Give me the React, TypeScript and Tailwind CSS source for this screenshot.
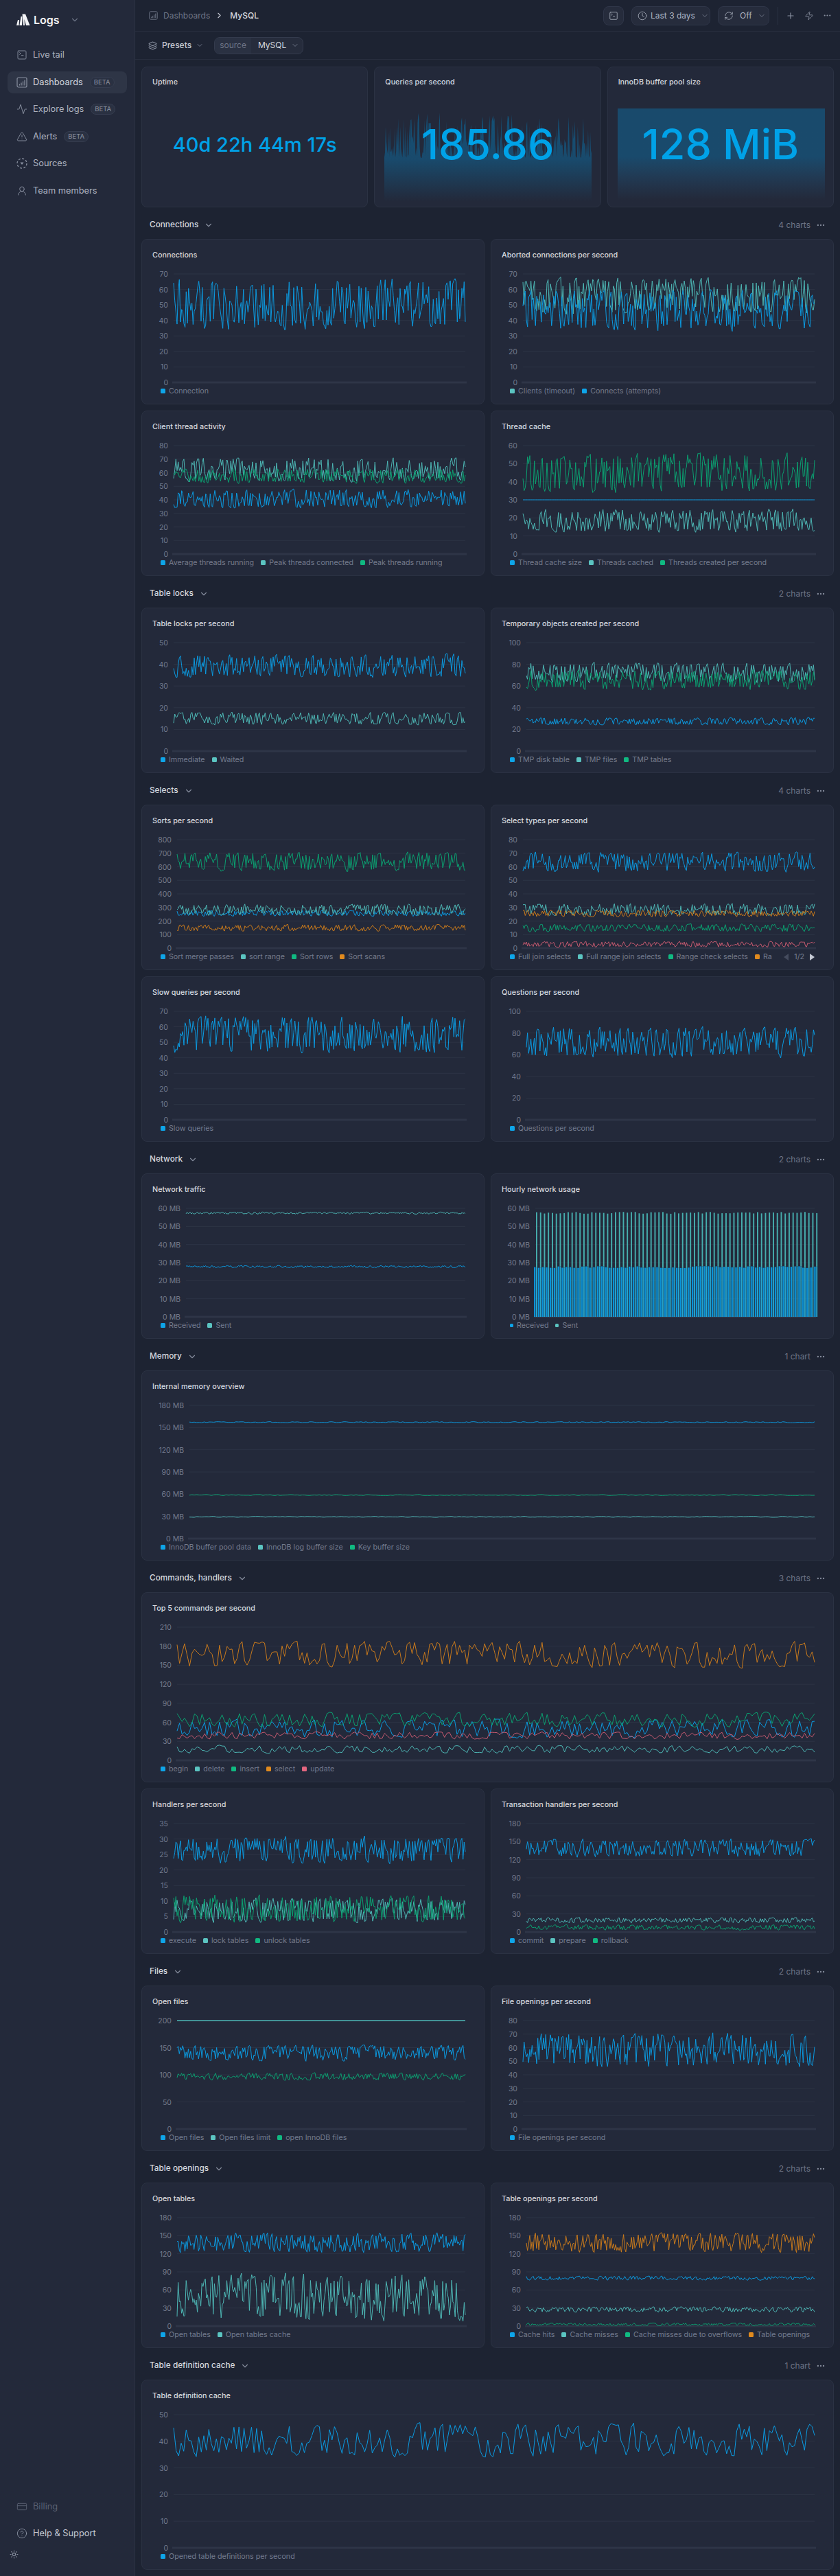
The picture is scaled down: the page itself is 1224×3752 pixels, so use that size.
import React from "react";
import {
  Activity,
  ChevronDown,
  ChevronRight,
  CircleHelp,
  Clock,
  CreditCard,
  Ellipsis,
  Layers3,
  Plus,
  RefreshCw,
  SquareTerminal,
  Sun,
  TriangleAlert,
  UserRound,
  Zap,
} from "lucide-react";

type ColorName = "blue" | "teal" | "green" | "orange" | "red";

const STROKES: Record<ColorName, string> = {
  blue: "#0b9ae0",
  teal: "#4db6b4",
  green: "#0b9f70",
  orange: "#c97a1c",
  red: "#c4596f",
};

const SWATCHES: Record<ColorName, string> = {
  blue: "bg-[#0ea5e9]",
  teal: "bg-[#5bc4c1]",
  green: "bg-[#10b981]",
  orange: "bg-[#e08a1e]",
  red: "bg-[#e3667f]",
};

type Series = { name: string; color: ColorName; lo: number; hi: number; thick?: boolean };

type ChartDef = {
  title: string;
  ticks: string[];
  max: number;
  series: Series[];
  left?: number;
  wide?: boolean;
  bars?: boolean;
  pager?: boolean;
};

type SectionDef = { title: string; count: string; charts: ChartDef[] };

const seq = (step: number, n: number, unit = "") =>
  Array.from({ length: n + 1 }, (_, i) => `${i * step}${unit}`);

const SECTIONS: SectionDef[] = [
  {
    title: "Connections",
    count: "4 charts",
    charts: [
      {
        title: "Connections",
        ticks: seq(10, 7),
        max: 70,
        series: [{ name: "Connection", color: "blue", lo: 34, hi: 67 }],
      },
      {
        title: "Aborted connections per second",
        ticks: seq(10, 7),
        max: 70,
        series: [
          { name: "Clients (timeout)", color: "teal", lo: 44, hi: 68 },
          { name: "Connects (attempts)", color: "blue", lo: 33, hi: 60 },
        ],
      },
      {
        title: "Client thread activity",
        ticks: seq(10, 8),
        max: 80,
        series: [
          { name: "Average threads running", color: "blue", lo: 34, hi: 48 },
          { name: "Peak threads connected", color: "teal", lo: 53, hi: 71 },
          { name: "Peak threads running", color: "green", lo: 52, hi: 63 },
        ],
      },
      {
        title: "Thread cache",
        ticks: seq(10, 6),
        max: 60,
        series: [
          { name: "Thread cache size", color: "blue", lo: 30, hi: 30 },
          { name: "Threads cached", color: "teal", lo: 12, hi: 25 },
          { name: "Threads created per second", color: "green", lo: 34, hi: 56 },
        ],
      },
    ],
  },
  {
    title: "Table locks",
    count: "2 charts",
    charts: [
      {
        title: "Table locks per second",
        ticks: seq(10, 5),
        max: 50,
        series: [
          { name: "Immediate", color: "blue", lo: 34, hi: 45 },
          { name: "Waited", color: "teal", lo: 12, hi: 18 },
        ],
      },
      {
        title: "Temporary objects created per second",
        ticks: seq(20, 5),
        max: 100,
        left: 51,
        series: [
          { name: "TMP disk table", color: "blue", lo: 24, hi: 31 },
          { name: "TMP files", color: "teal", lo: 63, hi: 82 },
          { name: "TMP tables", color: "green", lo: 56, hi: 75 },
        ],
      },
    ],
  },
  {
    title: "Selects",
    count: "4 charts",
    charts: [
      {
        title: "Sorts per second",
        ticks: seq(100, 8),
        max: 800,
        left: 51,
        series: [
          { name: "Sort merge passes", color: "blue", lo: 235, hi: 280 },
          { name: "sort range", color: "teal", lo: 240, hi: 325 },
          { name: "Sort rows", color: "green", lo: 565, hi: 710 },
          { name: "Sort scans", color: "orange", lo: 125, hi: 175 },
        ],
      },
      {
        title: "Select types per second",
        ticks: seq(10, 8),
        max: 80,
        pager: true,
        series: [
          { name: "Full join selects", color: "blue", lo: 56, hi: 71 },
          { name: "Full range join selects", color: "teal", lo: 24, hi: 33 },
          { name: "Range check selects", color: "green", lo: 12, hi: 18 },
          { name: "Ra", color: "orange", lo: 23, hi: 28 },
          { name: "", color: "red", lo: 0.5, hi: 5 },
        ],
      },
      {
        title: "Slow queries per second",
        ticks: seq(10, 7),
        max: 70,
        series: [{ name: "Slow queries", color: "blue", lo: 43, hi: 67 }],
      },
      {
        title: "Questions per second",
        ticks: seq(20, 5),
        max: 100,
        left: 51,
        series: [{ name: "Questions per second", color: "blue", lo: 57, hi: 86 }],
      },
    ],
  },
  {
    title: "Network",
    count: "2 charts",
    charts: [
      {
        title: "Network traffic",
        ticks: seq(10, 6, " MB"),
        max: 60,
        left: 64,
        series: [
          { name: "Received", color: "blue", lo: 27.2, hi: 28.4 },
          { name: "Sent", color: "teal", lo: 56.8, hi: 58 },
        ],
      },
      {
        title: "Hourly network usage",
        ticks: seq(10, 6, " MB"),
        max: 60,
        left: 64,
        bars: true,
        series: [
          { name: "Received", color: "blue", lo: 27, hi: 28 },
          { name: "Sent", color: "teal", lo: 57, hi: 58 },
        ],
      },
    ],
  },
  {
    title: "Memory",
    count: "1 chart",
    charts: [
      {
        title: "Internal memory overview",
        ticks: seq(30, 6, " MB"),
        max: 180,
        left: 69,
        wide: true,
        series: [
          { name: "InnoDB buffer pool data", color: "blue", lo: 156.5, hi: 158 },
          { name: "InnoDB log buffer size", color: "teal", lo: 28.8, hi: 30 },
          { name: "Key buffer size", color: "green", lo: 58, hi: 59.5 },
        ],
      },
    ],
  },
  {
    title: "Commands, handlers",
    count: "3 charts",
    charts: [
      {
        title: "Top 5 commands per second",
        ticks: seq(30, 7),
        max: 210,
        left: 51,
        wide: true,
        series: [
          { name: "begin", color: "blue", lo: 35, hi: 65 },
          { name: "delete", color: "teal", lo: 11, hi: 24 },
          { name: "insert", color: "green", lo: 52, hi: 76 },
          { name: "select", color: "orange", lo: 145, hi: 188 },
          { name: "update", color: "red", lo: 33, hi: 45 },
        ],
      },
      {
        title: "Handlers per second",
        ticks: seq(5, 7),
        max: 35,
        series: [
          { name: "execute", color: "blue", lo: 22, hi: 31 },
          { name: "lock tables", color: "teal", lo: 3, hi: 11 },
          { name: "unlock tables", color: "green", lo: 3, hi: 12 },
        ],
      },
      {
        title: "Transaction handlers per second",
        ticks: seq(30, 6),
        max: 180,
        left: 51,
        series: [
          { name: "commit", color: "blue", lo: 124, hi: 155 },
          { name: "prepare", color: "teal", lo: 15, hi: 24 },
          { name: "rollback", color: "green", lo: 3, hi: 12 },
        ],
      },
    ],
  },
  {
    title: "Files",
    count: "2 charts",
    charts: [
      {
        title: "Open files",
        ticks: seq(50, 4),
        max: 200,
        left: 51,
        series: [
          { name: "Open files", color: "blue", lo: 125, hi: 155 },
          { name: "Open files limit", color: "teal", lo: 200, hi: 200, thick: true },
          { name: "open InnoDB files", color: "green", lo: 90, hi: 104 },
        ],
      },
      {
        title: "File openings per second",
        ticks: seq(10, 8),
        max: 80,
        series: [{ name: "File openings per second", color: "blue", lo: 46, hi: 71 }],
      },
    ],
  },
  {
    title: "Table openings",
    count: "2 charts",
    charts: [
      {
        title: "Open tables",
        ticks: seq(30, 6),
        max: 180,
        left: 51,
        series: [
          { name: "Open tables", color: "blue", lo: 122, hi: 155 },
          { name: "Open tables cache", color: "teal", lo: 8, hi: 88 },
        ],
      },
      {
        title: "Table openings per second",
        ticks: seq(30, 6),
        max: 180,
        left: 51,
        series: [
          { name: "Cache hits", color: "blue", lo: 76, hi: 83 },
          { name: "Cache misses", color: "teal", lo: 23, hi: 32 },
          { name: "Cache misses due to overflows", color: "green", lo: 0.5, hi: 5 },
          { name: "Table openings", color: "orange", lo: 122, hi: 155 },
        ],
      },
    ],
  },
  {
    title: "Table definition cache",
    count: "1 chart",
    charts: [
      {
        title: "Table definition cache",
        ticks: seq(10, 5),
        max: 50,
        wide: true,
        series: [{ name: "Opened table definitions per second", color: "blue", lo: 34, hi: 47 }],
      },
    ],
  },
];

// small seeded generator so the noise stays the same between runs
const randomFrom = (seed: number) => {
  let a = seed >>> 0;
  return () => {
    a = (a + 0x6d2b79f5) | 0;
    let t = Math.imul(a ^ (a >>> 15), 1 | a);
    t = (t + Math.imul(t ^ (t >>> 7), 61 | t)) ^ t;
    return ((t ^ (t >>> 14)) >>> 0) / 4294967296;
  };
};

const hashText = (text: string) => {
  let h = 7;
  for (const ch of text) h = (Math.imul(h, 31) + ch.charCodeAt(0)) | 0;
  return h;
};

const noise = (seed: string, count: number) => {
  const rand = randomFrom(hashText(seed));
  const out: number[] = [];
  let prev = 0.5;
  for (let i = 0; i < count; i++) {
    const r = rand();
    const pushed = r < 0.28 ? r / 0.28 / 6 : r > 0.72 ? 1 - (1 - r) / 0.28 / 6 : r;
    prev = pushed * 0.82 + prev * 0.18;
    out.push(prev);
  }
  const min = Math.min(...out);
  const max = Math.max(...out);
  return out.map((v) => (v - min) / (max - min));
};

const PLOT_TOP = 11;

const Chart = ({ def }: { def: ChartDef }) => {
  const width = def.wide ? 1007 : 498;
  const height = def.wide ? 212 : 176;
  const axis = def.wide ? 205 : 169;
  const left = def.left ?? 46;
  const right = width - 27;
  const toY = (v: number) => axis - (v / def.max) * (axis - PLOT_TOP);
  const step = (axis - PLOT_TOP) / (def.ticks.length - 1);

  return (
    <svg width={width} height={height} className="block">
      {def.ticks.map((label, i) => {
        const y = axis - step * i;
        return (
          <g key={label}>
            {i > 0 && <line x1={left} x2={right} y1={y} y2={y} stroke="#2d3445" />}
            <text
              x={left - 8}
              y={y + 4}
              textAnchor="end"
              className="fill-[#747b8d] text-[10.5px]"
            >
              {label}
            </text>
          </g>
        );
      })}
      <rect x={left - 2} y={axis - 1.5} width={right - left + 4} height={3} fill="#2e3547" />
      {def.bars ? (
        <Bars def={def} left={left - 2} toY={toY} axis={axis} />
      ) : (
        def.series.map((s) => {
          const values = noise(def.title + s.name + s.color, 256);
          const points = values
            .map((v, i) => {
              const x = left + (i / 255) * (right - left);
              return `${x.toFixed(1)},${toY(s.lo + v * (s.hi - s.lo)).toFixed(1)}`;
            })
            .join(" ");
          return (
            <polyline
              key={s.color}
              points={points}
              fill="none"
              stroke={STROKES[s.color]}
              strokeWidth={s.thick ? 1.5 : 1}
              strokeLinejoin="round"
            />
          );
        })
      )}
    </svg>
  );
};

const Bars = ({
  def,
  left,
  toY,
  axis,
}: {
  def: ChartDef;
  left: number;
  toY: (v: number) => number;
  axis: number;
}) => {
  const [received, sent] = def.series;
  const low = noise("hourly-received", 72);
  const high = noise("hourly-sent", 72);
  return (
    <g>
      {low.map((v, i) => {
        const x = left + i * 5.75;
        const lowY = toY(received.lo + v * (received.hi - received.lo));
        const highY = toY(sent.lo + high[i] * (sent.hi - sent.lo));
        return (
          <g key={i}>
            <rect x={x} y={lowY} width={2.4} height={axis - lowY} fill="#0a93d8" />
            <rect x={x + 3} y={highY} width={1.9} height={lowY - highY} fill="#46aeae" />
            <rect x={x + 3} y={lowY} width={1.9} height={axis - lowY} fill="#28a6cb" />
          </g>
        );
      })}
    </g>
  );
};

const Legend = ({ def }: { def: ChartDef }) => (
  <div className="flex h-[12px] items-center gap-[10px] overflow-hidden whitespace-nowrap pl-[27px] pr-[27px] text-[10.7px] leading-none text-[#747b8d]">
    {def.series
      .filter((s) => s.name)
      .map((s) => (
        <div key={s.color} className="flex shrink-0 items-center gap-[5px]">
          <span
            className={`rounded-[1.5px] ${SWATCHES[s.color]} ${def.bars ? "h-[5px] w-[5px]" : "h-[7px] w-[7px]"}`}
          />
          <span>{s.name}</span>
        </div>
      ))}
    {def.pager && (
      <div className="ml-auto flex shrink-0 items-center gap-[8px]">
        <span className="h-0 w-0 border-y-[5px] border-r-[7px] border-y-transparent border-r-[#454c5e]" />
        <span>1/2</span>
        <span className="h-0 w-0 border-y-[5px] border-l-[7px] border-y-transparent border-l-[#c4c9d4]" />
      </div>
    )}
  </div>
);

const Card = ({ def }: { def: ChartDef }) => (
  <div
    className={`flex flex-col rounded-lg border border-[#2b3243] bg-[#23293a] ${
      def.wide ? "col-span-2 h-[277px]" : "h-[241px]"
    }`}
  >
    <div className="flex h-[39px] items-end pb-[8px] pl-[15px] text-[10.8px] font-medium leading-4 text-[#d5d8df]">
      {def.title}
    </div>
    <Chart def={def} />
    <Legend def={def} />
  </div>
);

const Section = ({ section }: { section: SectionDef }) => (
  <section>
    <div className="flex h-[46px] items-center justify-between pl-[12px] pr-[12px] pt-[5px]">
      <div className="flex items-center gap-[8px] text-[11.8px] font-medium text-[#d5d8df]">
        {section.title}
        <ChevronDown size={14} className="text-[#858c9c]" />
      </div>
      <div className="flex items-center gap-[8px] text-[12px] text-[#6d7486]">
        {section.count}
        <Ellipsis size={14} className="text-[#858c9c]" />
      </div>
    </div>
    <div className="grid grid-cols-2 gap-[9px]">
      {section.charts.map((c) => (
        <Card key={c.title} def={c} />
      ))}
    </div>
  </section>
);

const Logo = () => (
  <svg width="20" height="18" viewBox="0 0 20 18" fill="#f3f4f6">
    <polygon points="0,17 2,9 4,9 3.5,17" />
    <polygon points="4.5,17 6.5,4 8.5,4 8,17" />
    <polygon points="10,17 8.5,0.5 13,0.5 19.5,17 14,17 11.5,8 12,17" />
  </svg>
);

const DashIcon = ({ size = 16 }: { size?: number }) => (
  <svg width={size} height={size} viewBox="0 0 16 16" fill="none" stroke="currentColor" strokeWidth="1.2">
    <rect x="1" y="1" width="14" height="14" rx="2" />
    <path d="M4.5 12.5v-2M7 12.5v-4M9.5 12.5v-6M12 12.5v-8" />
  </svg>
);

const SourcesIcon = () => (
  <svg width="16" height="16" viewBox="0 0 16 16" fill="none" stroke="currentColor" strokeWidth="1.3">
    <circle cx="8" cy="8" r="7" strokeDasharray="3 2.5" />
    <path d="M5.5 6.5h5L8 10z" fill="currentColor" stroke="none" />
  </svg>
);

const Beta = () => (
  <span className="ml-[2px] rounded-full border border-[#363d50] bg-[#2a3142] px-[5px] text-[9.5px] leading-[14px] text-[#8a91a1]">
    BETA
  </span>
);

const NAV = [
  { label: "Live tail", icon: <SquareTerminal size={16} strokeWidth={1.4} /> },
  { label: "Dashboards", icon: <DashIcon />, beta: true, active: true },
  { label: "Explore logs", icon: <Activity size={16} strokeWidth={1.4} />, beta: true },
  { label: "Alerts", icon: <TriangleAlert size={16} strokeWidth={1.4} />, beta: true },
  { label: "Sources", icon: <SourcesIcon /> },
  { label: "Team members", icon: <UserRound size={16} strokeWidth={1.4} /> },
];

const Sidebar = () => (
  <aside className="flex w-[197px] shrink-0 flex-col border-r border-[#2b3243] bg-[#23293a]">
    <div className="flex h-[56px] items-center gap-[5px] pl-[24px] pt-[1px]">
      <Logo />
      <span className="text-[16px] font-semibold text-[#f3f4f6]">Logs</span>
      <ChevronDown size={14} className="ml-[10px] text-[#6d7486]" />
    </div>
    <nav className="mt-[8px] flex flex-col gap-[7.5px] px-[11px]">
      {NAV.map((item) => (
        <div
          key={item.label}
          className={`flex h-[32px] items-center gap-[8px] rounded-lg pl-[13px] text-[12.8px] ${
            item.active ? "bg-[#2e3546] text-[#d5d8df]" : "text-[#adb3c0]"
          }`}
        >
          <span className="text-[#8a91a1]">{item.icon}</span>
          <span>{item.label}</span>
          {item.beta && <Beta />}
        </div>
      ))}
    </nav>
    <div className="mt-auto flex flex-col gap-[7px] pb-[25px] px-[11px]">
      <div className="flex h-[32px] items-center gap-[8px] pl-[13px] text-[12.8px] text-[#5a6172]">
        <CreditCard size={16} strokeWidth={1.4} />
        <span>Billing</span>
      </div>
      <div className="flex h-[32px] items-center gap-[8px] pl-[13px] text-[12.8px] text-[#c5c9d3]">
        <CircleHelp size={16} strokeWidth={1.4} className="text-[#8a91a1]" />
        <span>Help & Support</span>
      </div>
      <Sun size={13} className="ml-[3px] mt-[1px] text-[#8a91a1]" />
    </div>
  </aside>
);

const TopButton = ({ children, className }: { children: React.ReactNode; className: string }) => (
  <div
    className={`flex h-[28px] items-center rounded-lg border border-[#2f3648] bg-[#262c3c] text-[12px] text-[#adb3c0] ${className}`}
  >
    {children}
  </div>
);

const Header = () => (
  <header className="flex h-[46px] items-center border-b border-[#282e3e] pl-[20px] pr-[12px]">
    <span className="text-[#6d7486]">
      <DashIcon size={13} />
    </span>
    <span className="ml-[8px] text-[12px] text-[#6d7486]">Dashboards</span>
    <ChevronRight size={13} className="ml-[7px] text-[#c5c9d3]" />
    <span className="ml-[9px] text-[12px] font-medium text-[#d5d8df]">MySQL</span>
    <div className="ml-auto flex items-center">
      <TopButton className="w-[30px] justify-center">
        <SquareTerminal size={14} strokeWidth={1.4} />
      </TopButton>
      <TopButton className="ml-[11px] w-[115px] pl-[8px]">
        <Clock size={14} strokeWidth={1.4} />
        <span className="ml-[5px]">Last 3 days</span>
        <ChevronDown size={12} className="ml-[8px] text-[#6d7486]" />
      </TopButton>
      <TopButton className="ml-[11px] w-[75px] pl-[8px]">
        <RefreshCw size={14} strokeWidth={1.4} />
        <span className="ml-[9px]">Off</span>
        <ChevronDown size={12} className="ml-[8px] text-[#6d7486]" />
      </TopButton>
      <div className="ml-[12px] h-[26px] w-px bg-[#2b3243]" />
      <Plus size={14} className="ml-[11px] text-[#8a91a1]" />
      <Zap size={14} strokeWidth={1.5} className="ml-[13px] text-[#8a91a1]" />
      <Ellipsis size={13} className="ml-[13px] text-[#8a91a1]" />
    </div>
  </header>
);

const Toolbar = () => (
  <div className="flex h-[41px] items-center border-b border-[#282e3e] pl-[19px]">
    <Layers3 size={13} className="text-[#8a91a1]" />
    <span className="ml-[7px] text-[12px] font-medium text-[#c5c9d3]">Presets</span>
    <ChevronDown size={12} className="ml-[6px] text-[#6d7486]" />
    <div className="ml-[15px] flex h-[25px] w-[130px] items-center overflow-hidden rounded-lg border border-[#343b4d] bg-[#262c3c] text-[12px]">
      <span className="flex h-full items-center bg-[#2a3142] px-[7px] text-[#6d7486]">source</span>
      <span className="ml-[10px] text-[#d5d8df]">MySQL</span>
      <ChevronDown size={12} className="ml-[7px] text-[#6d7486]" />
    </div>
  </div>
);

const sparkPoints = () => {
  const values = noise("queries-spark", 300);
  const tops = values.map((v, i) => {
    const x = (i / 299) * 302;
    return `${x.toFixed(1)},${(70 - v * v * 66).toFixed(1)}`;
  });
  return `0,140 ${tops.join(" ")} 302,140`;
};

const StatCard = ({ title, children }: { title: string; children: React.ReactNode }) => (
  <div className="relative flex h-[205px] flex-col overflow-hidden rounded-lg border border-[#2b3243] bg-[#23293a]">
    <div className="h-[39px] pl-[15px] pt-[14px] text-[10.8px] font-medium leading-4 text-[#d5d8df]">
      {title}
    </div>
    {children}
  </div>
);

const Stats = () => (
  <div className="grid grid-cols-3 gap-[9px] pt-[10px]">
    <StatCard title="Uptime">
      <div className="flex flex-1 items-center justify-center pb-[16px] text-[29px] font-medium text-[#00a2e8]">
        40d 22h 44m 17s
      </div>
    </StatCard>
    <StatCard title="Queries per second">
      <svg width="302" height="140" className="absolute left-[14px] top-[62px]">
        <defs>
          <linearGradient id="spark" x1="0" y1="0" x2="0" y2="1">
            <stop offset="0" stopColor="#135076" />
            <stop offset="0.5" stopColor="#194a6c" />
            <stop offset="0.95" stopColor="#23293a" />
          </linearGradient>
        </defs>
        <polygon points={sparkPoints()} fill="url(#spark)" />
      </svg>
      <div className="relative flex flex-1 items-center justify-center pb-[16px] text-[61px] font-medium text-[#00a2e8]">
        185.86
      </div>
    </StatCard>
    <StatCard title="InnoDB buffer pool size">
      <div className="absolute left-[14px] top-[60px] h-[140px] w-[302px] bg-linear-to-b from-[#194a6c] from-50% to-[#23293a] to-95%" />
      <div className="relative flex flex-1 items-center justify-center pb-[16px] text-[61px] font-medium text-[#00a2e8]">
        128 MiB
      </div>
    </StatCard>
  </div>
);

export default function App() {
  return (
    <div className="flex min-h-[3752px] w-full bg-[#1d2332] font-[Inter,'Noto_Sans',sans-serif]">
      <Sidebar />
      <div className="min-w-0 flex-1">
        <Header />
        <Toolbar />
        <main className="px-[9px] pb-[9px]">
          <Stats />
          {SECTIONS.map((s) => (
            <Section key={s.title} section={s} />
          ))}
        </main>
      </div>
    </div>
  );
}
